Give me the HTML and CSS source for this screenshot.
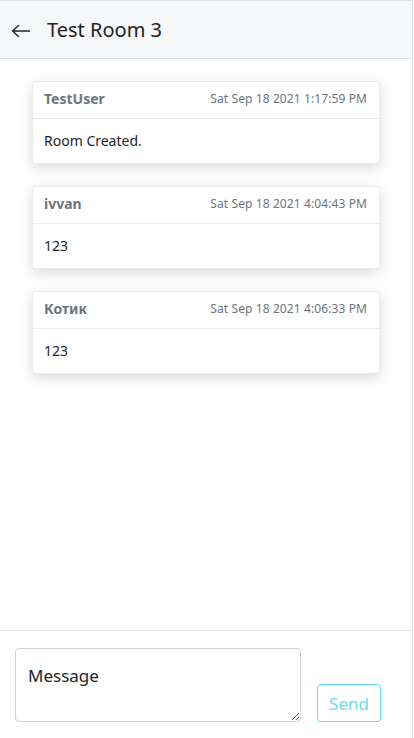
FILE: index.html
```html
<!DOCTYPE html>
<html lang="en">
<head>
<meta charset="utf-8">
<title>Test Room 3</title>
<link rel="stylesheet" href="styles.css">
</head>
<body>
<div class="app">
  <header class="topbar">
    <button class="back" aria-label="Back">
      <svg width="20" height="14" viewBox="0 0 20 14" fill="none" stroke="#222" stroke-width="1.4" stroke-linecap="round" stroke-linejoin="round"><path d="M18.5 7H1.5M7.5 1.5L1.5 7l6 5.5"/></svg>
    </button>
    <h1 class="title">Test Room 3</h1>
  </header>
  <main class="messages">
    <div class="card">
      <div class="card-header"><span class="name">TestUser</span><span class="date">Sat Sep 18 2021 1:17:59 PM</span></div>
      <div class="card-body">Room Created.</div>
    </div>
    <div class="card">
      <div class="card-header"><span class="name">ivvan</span><span class="date">Sat Sep 18 2021 4:04:43 PM</span></div>
      <div class="card-body">123</div>
    </div>
    <div class="card">
      <div class="card-header"><span class="name">Котик</span><span class="date">Sat Sep 18 2021 4:06:33 PM</span></div>
      <div class="card-body">123</div>
    </div>
  </main>
  <footer class="composer">
    <textarea class="input" placeholder="Message"></textarea>
    <button class="send" disabled>Send</button>
  </footer>
</div>
</body>
</html>
```
FILE: styles.css
```css
* { box-sizing: border-box; }
html, body { margin: 0; padding: 0; background: #fff; }
body {
  font-family: "Noto Sans", "Open Sans", sans-serif;
  color: #212529;
  width: 414px;
  height: 738px;
  overflow: hidden;
}
.app {
  width: 413px;
  height: 738px;
  border-top: 1px solid #dee2e6;
  border-right: 1px solid #dee2e6;
  display: flex;
  flex-direction: column;
}
.topbar {
  height: 58px;
  flex: none;
  background: #f7f8fa;
  border-bottom: 1px solid #dee2e6;
  display: flex;
  align-items: center;
  padding: 0 0 0 11px;
}
.back {
  border: 0;
  background: none;
  padding: 0;
  width: 20px;
  height: 20px;
  display: flex;
  align-items: center;
  margin-top: 3px;
}
.title {
  margin: 0 0 0 16px;
  font-size: 20px;
  font-weight: 400;
  color: #222;
  line-height: 1.2;
}
.messages {
  flex: 1;
  padding: 22px 32px 0;
  display: flex;
  flex-direction: column;
  gap: 22px;
}
.card {
  background: #fff;
  border: 1px solid rgba(0,0,0,0.08);
  border-radius: 4px;
  box-shadow: 0 4px 14px rgba(0,0,0,0.15);
}
.card-header {
  display: flex;
  justify-content: space-between;
  align-items: center;
  padding: 0 12px 3px 11px;
  border-bottom: 1px solid rgba(0,0,0,0.08);
  height: 37px;
}
.name {
  font-size: 14px;
  font-weight: 700;
  color: #6c757d;
}
.date {
  font-size: 12px;
  letter-spacing: 0.1px;
  color: #6c757d;
}
.card-body {
  padding: 0 12px 2px 11px;
  height: 44px;
  display: flex;
  align-items: center;
  font-size: 14px;
  color: #212529;
}
.composer {
  flex: none;
  height: 108px;
  border-top: 1px solid #dee2e6;
  display: flex;
  align-items: flex-end;
  padding: 0 31px 16px 15px;
  gap: 16px;
}
.input {
  width: 286px;
  height: 74px;
  border: 1px solid #ced4da;
  border-radius: 4px;
  padding: 14px 12px;
  font-family: "Noto Sans", "Open Sans", sans-serif;
  font-size: 17px;
  line-height: 1.5;
  color: #212529;
  resize: vertical;
}
.input::placeholder { color: #212529; opacity: 1; }
.send {
  width: 64px;
  height: 38px;
  border: 1px solid #0dcaf0;
  border-radius: 4px;
  background: #fff;
  color: #0dcaf0;
  font-family: "Noto Sans", "Open Sans", sans-serif;
  font-size: 17px;
  opacity: 0.65;
  padding: 0;
}
```
